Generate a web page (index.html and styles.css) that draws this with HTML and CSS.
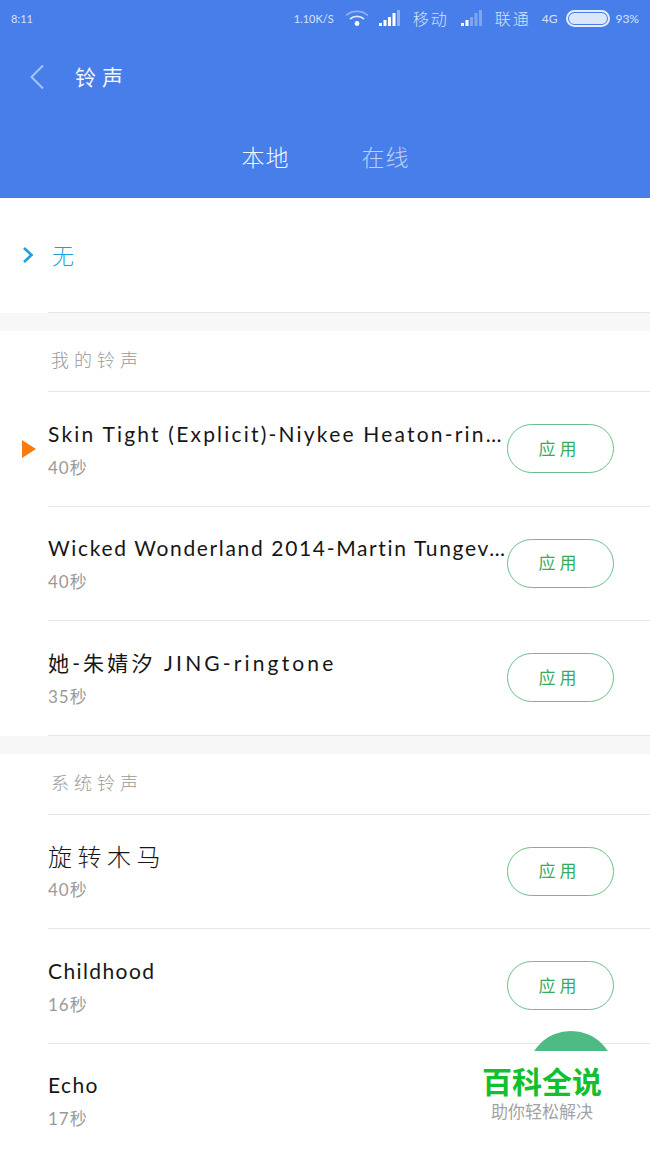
FILE: index.html
```html
<!DOCTYPE html>
<html lang="zh">
<head>
<meta charset="utf-8">
<title>铃声</title>
<link rel="stylesheet" href="styles.css">
</head>
<body>
<div class="screen">
  <header class="top">
    <div class="status">
      <span class="time">8:11</span>
      <div class="status-right">
        <span class="speed">1.10K/S</span>
        <svg class="wifi" width="24" height="18" viewBox="0 0 24 18" fill="none">
          <path d="M1 6.5C7 1 17 1 23 6.5" stroke="#8fb2ef" stroke-width="1.6"/>
          <path d="M5 10C9 6.5 15 6.5 19 10" stroke="#dce7fa" stroke-width="1.8"/>
          <circle cx="12" cy="14.5" r="2.4" fill="#fff"/>
        </svg>
        <svg class="bars" width="22" height="16" viewBox="0 0 22 16">
          <rect x="0" y="13" width="3" height="3" fill="#fff"/>
          <rect x="4.5" y="10" width="3" height="6" fill="#fff"/>
          <rect x="9" y="7" width="3" height="9" fill="#fff"/>
          <rect x="13.5" y="3" width="3" height="13" fill="#fff"/>
          <rect x="18" y="0" width="3" height="16" fill="#8fb2ef"/>
        </svg>
        <span class="carrier">移动</span>
        <svg class="bars" width="22" height="16" viewBox="0 0 22 16">
          <rect x="0" y="13" width="3" height="3" fill="#fff"/>
          <rect x="4.5" y="10" width="3" height="6" fill="#fff"/>
          <rect x="9" y="7" width="3" height="9" fill="#7fa5ec"/>
          <rect x="13.5" y="3" width="3" height="13" fill="#7fa5ec"/>
          <rect x="18" y="0" width="3" height="16" fill="#7fa5ec"/>
        </svg>
        <span class="carrier">联通</span>
        <span class="net">4G</span>
        <span class="battery"><span class="battery-fill"></span></span>
        <span class="percent">93%</span>
      </div>
    </div>
    <div class="titlebar">
      <svg class="back" width="16" height="26" viewBox="0 0 16 26" fill="none">
        <path d="M14 1.5L2.5 13 14 24.5" stroke="#a9c4f3" stroke-width="2"/>
      </svg>
      <h1 class="title">铃声</h1>
    </div>
    <nav class="tabs">
      <span class="tab tab-on">本地</span>
      <span class="tab">在线</span>
    </nav>
  </header>

  <section class="none-row">
    <svg class="chev" width="12" height="18" viewBox="0 0 12 18" fill="none">
      <path d="M2 2l7.5 7L2 16" stroke="#1c9ee0" stroke-width="2.6"/>
    </svg>
    <span class="none-text">无</span>
    <div class="none-line"></div>
  </section>

  <div class="gap"></div>

  <section class="group">
    <div class="group-head">我的铃声</div>
    <div class="row">
      <span class="playing"></span>
      <div class="info">
        <div class="name name-skin">Skin Tight (Explicit)-Niykee Heaton-rin…</div>
        <div class="len">40秒</div>
      </div>
      <button class="apply">应用</button>
    </div>
    <div class="row">
      <div class="info">
        <div class="name name-wick">Wicked Wonderland 2014-Martin Tungev…</div>
        <div class="len">40秒</div>
      </div>
      <button class="apply">应用</button>
    </div>
    <div class="row">
      <div class="info">
        <div class="name name-jing">她-朱婧汐 JING-ringtone</div>
        <div class="len">35秒</div>
      </div>
      <button class="apply">应用</button>
    </div>
  </section>

  <div class="gap"></div>

  <section class="group">
    <div class="group-head">系统铃声</div>
    <div class="row">
      <div class="info">
        <div class="name name-wide">旋转木马</div>
        <div class="len">40秒</div>
      </div>
      <button class="apply">应用</button>
    </div>
    <div class="row">
      <div class="info">
        <div class="name name-en">Childhood</div>
        <div class="len">16秒</div>
      </div>
      <button class="apply">应用</button>
    </div>
    <div class="row row-last">
      <div class="info">
        <div class="name name-en">Echo</div>
        <div class="len">17秒</div>
      </div>
    </div>
  </section>

  <div class="fab"></div>
  <div class="mark">
    <div class="mark-name">百科全说</div>
    <div class="mark-sub">助你轻松解决</div>
  </div>
</div>
</body>
</html>
```

FILE: styles.css
```css
* { box-sizing: border-box; }
html, body { margin: 0; padding: 0; background: #fff; }
body { font-family: "Lato", "Noto Sans CJK SC", sans-serif; }
.screen { position: relative; width: 650px; height: 1155px; overflow: hidden; background: #fff; }

.top { height: 198px; background: #487ee9; color: #fff; }
.status { height: 36px; display: flex; align-items: center; justify-content: space-between; padding: 0 11px; }
.time { font-size: 11px; color: #d5e2fa; }
.status-right { display: flex; align-items: center; color: #d5e2fa; }
.speed { font-size: 11px; margin-right: 11px; }
.wifi { margin-right: 10px; }
.bars { margin-right: 12px; }
.carrier { font-size: 16px; letter-spacing: 2px; margin-right: 12px; font-family: "Noto Sans CJK SC", sans-serif; font-weight: 300; }
.net { font-size: 12px; margin-left: -1px; margin-right: 9px; }
.battery { width: 44px; height: 17px; border: 2px solid #e4edfc; border-radius: 9px; padding: 1px; display: block; margin-right: 5px; }
.battery-fill { display: block; height: 100%; width: 100%; background: #dbe6fb; border-radius: 6px; }
.percent { font-size: 12px; }

.titlebar { height: 80px; display: flex; align-items: center; padding: 0 0 0 29px; }
.back { margin-right: 30px; margin-top: 1px; }
.title { margin: 0; font-size: 21px; font-weight: 400; letter-spacing: 6px; color: #f1f5fd; font-family: "Noto Sans CJK SC", sans-serif; }

.tabs { display: flex; justify-content: center; gap: 72px; padding-top: 24px; padding-left: 1px; }
.tab { font-size: 23px; line-height: 32px; letter-spacing: 1px; color: #bcd0f6; font-family: "Noto Sans CJK SC", sans-serif; font-weight: 300; }
.tab-on { color: #f3f7fe; }

.none-row { position: relative; height: 115px; display: flex; align-items: center; padding-left: 22px; }
.chev { margin-right: 18px; margin-top: -1px; }
.none-text { font-size: 22px; color: #1f9fdc; font-family: "Noto Sans CJK SC", sans-serif; font-weight: 300; margin-top: -3px; }
.none-line { position: absolute; left: 48px; right: 0; bottom: 0; height: 1px; background: #e6e6e6; }

.gap { height: 18px; background: #f7f7f7; }

.group { background: #fff; }
.group-head { height: 61px; margin-left: 48px; padding: 0 0 4px 3px; display: flex; align-items: center; border-bottom: 1px solid #e6e6e6; font-size: 18px; letter-spacing: 5px; color: #9a9a9a; font-family: "Noto Sans CJK SC", sans-serif; font-weight: 300; }

.row { position: relative; margin-left: 48px; height: 114.5px; padding-right: 36px; display: flex; align-items: center; border-bottom: 1px solid #e6e6e6; }
.row-last { border-bottom: 0; height: 112px; }
.info { flex: 1; min-width: 0; }
.name { font-size: 21px; line-height: 30px; color: #161616; white-space: nowrap; }
.name-skin { letter-spacing: 2.2px; }
.name-wick { letter-spacing: 1.65px; }
.name-jing { letter-spacing: 3.15px; }
.name-en { letter-spacing: 1.4px; }
.name-wide { letter-spacing: 5.5px; font-size: 24px; font-family: "Noto Sans CJK SC", sans-serif; font-weight: 300; }
.len { font-size: 17px; line-height: 22px; margin-top: 8px; color: #9a9a9a; letter-spacing: 1px; }
.apply { flex: none; width: 107px; height: 49px; border: 1px solid #69bf87; border-radius: 25px; background: #fff; color: #35ad5d; font-size: 17px; letter-spacing: 4px; font-family: "Noto Sans CJK SC", sans-serif; font-weight: 400; padding: 0 2px 3px 0; }

.playing { position: absolute; left: -26px; top: 48px; width: 0; height: 0; border-left: 14px solid #fa7a0c; border-top: 9px solid transparent; border-bottom: 9px solid transparent; }

.fab { position: absolute; left: 527px; top: 1031px; width: 88px; height: 88px; border-radius: 50%; background: #4dbb83; }
.mark { position: absolute; left: 478px; top: 1051px; width: 150px; height: 84px; background: #fff; text-align: center; font-family: "Noto Sans CJK SC", sans-serif; }
.mark-name { margin: 14px 0 5px; padding-right: 22px; font-size: 30px; line-height: 30px; font-weight: 700; color: #10c02e; white-space: nowrap; }
.mark-sub { padding-right: 22px; font-size: 17px; line-height: 22px; color: #a3a3a3; white-space: nowrap; }
```
